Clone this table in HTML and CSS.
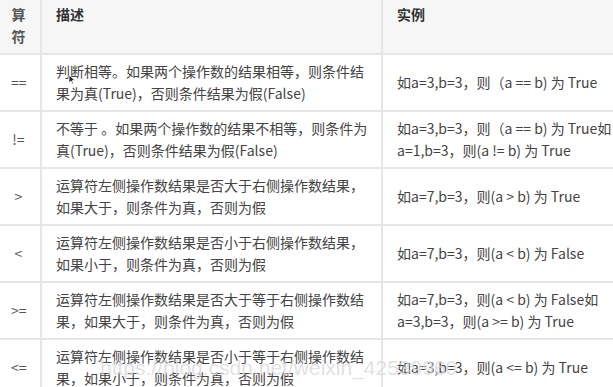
FILE: index.html
```html
<!DOCTYPE html>
<html lang="zh-CN">
<head>
<meta charset="utf-8">
<link rel="stylesheet" href="styles.css">
</head>
<body>
<div class="page">
<table class="ops">
  <colgroup>
    <col class="c-op">
    <col class="c-desc">
    <col class="c-ex">
  </colgroup>
  <thead>
    <tr><th class="op">运算符</th><th class="desc">描述</th><th>实例</th></tr>
  </thead>
  <tbody>
    <tr><td class="op">==</td><td class="desc">判断相等。如果两个操作数的结果相等，则条件结果为真(True)，否则条件结果为假(False)</td><td>如a=3,b=3，则（a == b) 为 True</td></tr>
    <tr><td class="op">!=</td><td class="desc">不等于 。如果两个操作数的结果不相等，则条件为真(True)，否则条件结果为假(False)</td><td>如a=3,b=3，则（a == b) 为 True如a=1,b=3，则(a != b) 为 True</td></tr>
    <tr><td class="op">&gt;</td><td class="desc">运算符左侧操作数结果是否大于右侧操作数结果，如果大于，则条件为真，否则为假</td><td>如a=7,b=3，则(a &gt; b) 为 True</td></tr>
    <tr><td class="op">&lt;</td><td class="desc">运算符左侧操作数结果是否小于右侧操作数结果，如果小于，则条件为真，否则为假</td><td>如a=7,b=3，则(a &lt; b) 为 False</td></tr>
    <tr><td class="op">&gt;=</td><td class="desc">运算符左侧操作数结果是否大于等于右侧操作数结果，如果大于，则条件为真，否则为假</td><td>如a=7,b=3，则(a &lt; b) 为 False如a=3,b=3，则(a &gt;= b) 为 True</td></tr>
    <tr><td class="op">&lt;=</td><td class="desc">运算符左侧操作数结果是否小于等于右侧操作数结果，如果小于，则条件为真，否则为假</td><td>如a=3,b=3，则(a &lt;= b) 为 True</td></tr>
  </tbody>
</table>
<svg class="cursor" width="8" height="11" viewBox="0 0 8 11"><path d="M1 1 L1 9 L3 7 L4.5 10 L5.5 9.5 L4.2 6.6 L7 6.6 Z" fill="#222" stroke="#fff" stroke-width="0.8"/></svg>
<div class="watermark">https://blog.csdn.net/weixin_42539960</div>
</div>
</body>
</html>
```
FILE: styles.css
```css
html, body {
  margin: 0;
  padding: 0;
  background: #ffffff;
}
.page {
  position: relative;
  width: 613px;
  height: 387px;
  overflow: hidden;
}
.ops {
  border-collapse: collapse;
  table-layout: fixed;
  width: 660px;
  margin-top: -27px;
  margin-left: -5px;
  font-family: "Noto Sans CJK SC", "Noto Sans", sans-serif;
  font-size: 14px;
  line-height: 22.5px;
  color: #444444;
}
.c-op { width: 45px; }
.c-desc { width: 341px; }
.c-ex { width: 274px; }
.ops th, .ops td {
  border: 2px solid #e6e6ea;
  padding: 5px 14px;
  vertical-align: middle;
  text-align: left;
}
.ops .desc {
  padding-right: 9px;
}
.ops th {
  background: #f6f6f7;
  font-weight: 700;
  color: #333333;
}
.ops .op {
  text-align: center;
  color: #555555;
  padding-left: 14px;
  padding-right: 14px;
}
.cursor {
  position: absolute;
  left: 68px;
  top: 74px;
}
.watermark {
  position: absolute;
  left: 100px;
  top: 356px;
  font-family: "Liberation Sans", sans-serif;
  font-size: 21px;
  color: rgba(200, 200, 205, 0.55);
  text-shadow: 0 0 1px rgba(255,255,255,0.6);
  white-space: nowrap;
}
```
